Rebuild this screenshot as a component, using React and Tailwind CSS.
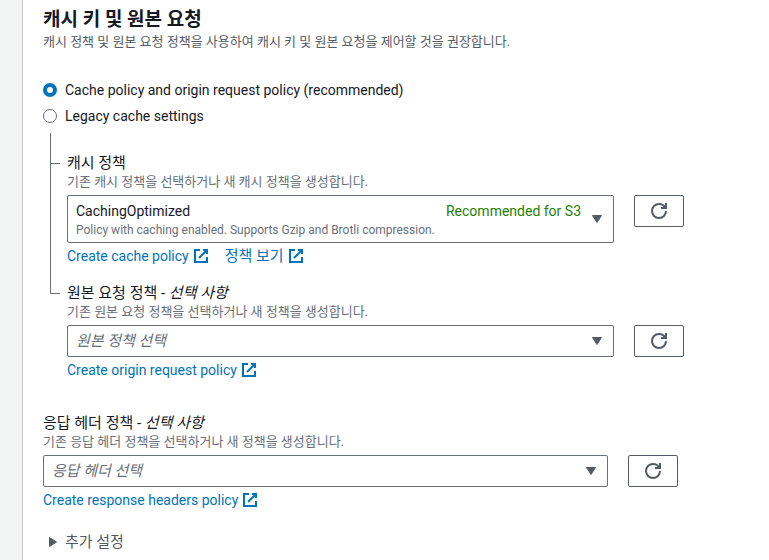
import clsx from "clsx";

const ExternalIcon = () => (
  <svg
    viewBox="0 0 16 16"
    className="w-4 h-4 shrink-0"
    fill="none"
    stroke="currentColor"
    strokeWidth="2"
    aria-hidden="true"
  >
    <path d="M14 9v5H2V2h5" />
    <path d="M6 10l8-8" />
    <path d="M10 2h4v4" />
  </svg>
);

const RefreshIcon = () => (
  <svg
    viewBox="0 0 16 16"
    className="w-4 h-4"
    fill="none"
    stroke="currentColor"
    strokeWidth="2"
    aria-hidden="true"
  >
    <path d="M15 8a7 7 0 1 1-7-7 6.9 6.9 0 0 1 6.3 4" />
    <path d="M10 5h5V0" />
  </svg>
);

const ExternalLink = ({ children, className }) => (
  <a
    href="#"
    className={clsx(
      "inline-flex items-center gap-1 text-[#0073bb] hover:underline",
      className
    )}
  >
    {children}
    <ExternalIcon />
  </a>
);

const Radio = ({ id, label, defaultChecked }) => (
  <div className="flex items-center gap-2">
    <input
      type="radio"
      name="cache-mode"
      id={id}
      defaultChecked={defaultChecked}
      className="appearance-none w-3.5 h-3.5 rounded-full border border-[#687078] bg-white checked:border-4 checked:border-[#0073bb]"
    />
    <label htmlFor={id}>{label}</label>
  </div>
);

const PolicyField = ({
  id,
  label,
  optional,
  description,
  value,
  detail,
  badge,
  links,
}) => {
  return (
    <div>
      <label htmlFor={id} className="block text-[15px]">
        {label}
        {optional && (
          <>
            {" - "}
            <i>선택 사항</i>
          </>
        )}
      </label>
      <p className="text-[13px] leading-4 text-[#687078]">{description}</p>
      <div className="flex items-start gap-5 mt-[5px]">
        <div className="relative flex-1">
          <select
            id={id}
            className={clsx(
              "block w-full appearance-none rounded-xs border border-[#687078] bg-white px-2",
              detail ? "h-12 pb-4" : "h-8 text-[15px] italic text-[#687078]"
            )}
          >
            <option>{value}</option>
          </select>
          {detail && (
            <div className="absolute inset-x-[9px] inset-y-[5px] pointer-events-none">
              <div className="text-right pr-6 text-[#1d8102]">{badge}</div>
              <div className="text-xs leading-4 text-[#687078]">{detail}</div>
            </div>
          )}
          <svg
            viewBox="0 0 10 8"
            className="absolute right-3 inset-y-0 my-auto w-2.5 h-2 pointer-events-none"
            fill="#545b64"
            stroke="#545b64"
            strokeLinejoin="round"
            aria-hidden="true"
          >
            <path d="M0.5 0.5h9L5 7.5z" />
          </svg>
        </div>
        <button
          type="button"
          aria-label="새로 고침"
          className="flex items-center justify-center w-[50px] h-8 rounded-xs border border-[#545b64] bg-white text-[#545b64]"
        >
          <RefreshIcon />
        </button>
      </div>
      <div className="flex gap-4 mt-0.5">
        {links.map((link) => (
          <ExternalLink key={link.text} className={link.className}>
            {link.text}
          </ExternalLink>
        ))}
      </div>
    </div>
  );
};

export default function App() {
  return (
    <div className="flex min-h-screen bg-[#f2f3f3] text-sm leading-[22px] text-[#16191f] font-['Roboto','Noto_Sans_CJK_KR',sans-serif]">
      <main className="flex-1 ml-[22px] border-l border-[#c6cccc] bg-white pl-5 pt-2">
        <h2 className="text-[19px] leading-6 font-bold">
          캐시 키 및 원본 요청
        </h2>
        <p className="mt-0.5 text-[13px] leading-4 text-[#545b64]">
          캐시 정책 및 원본 요청 정책을 사용하여 캐시 키 및 원본 요청을 제어할
          것을 권장합니다.
        </p>

        <div className="mt-[29px] flex flex-col gap-1">
          <Radio
            id="policy"
            label="Cache policy and origin request policy (recommended)"
            defaultChecked
          />
          <Radio id="legacy" label="Legacy cache settings" />
        </div>

        <div className="flex pl-[7px] pr-[85px] mt-1.5">
          <div className="w-2.5 mr-[7px]">
            <div className="h-[31px] border-l border-b border-[#687078]" />
            <div className="h-[130px] border-l border-b border-[#687078]" />
          </div>
          <div className="flex-1 flex flex-col gap-[15px] pt-[19px]">
            <PolicyField
              id="cache-policy"
              label="캐시 정책"
              description="기존 캐시 정책을 선택하거나 새 캐시 정책을 생성합니다."
              value="CachingOptimized"
              detail="Policy with caching enabled. Supports Gzip and Brotli compression."
              badge="Recommended for S3"
              links={[
                { text: "Create cache policy" },
                { text: "정책 보기", className: "text-[15px]" },
              ]}
            />
            <PolicyField
              id="origin-policy"
              label="원본 요청 정책"
              optional
              description="기존 원본 요청 정책을 선택하거나 새 정책을 생성합니다."
              value="원본 정책 선택"
              links={[{ text: "Create origin request policy" }]}
            />
          </div>
        </div>

        <div className="pr-[91px] mt-[31px]">
          <PolicyField
            id="headers-policy"
            label="응답 헤더 정책"
            optional
            description="기존 응답 헤더 정책을 선택하거나 새 정책을 생성합니다."
            value="응답 헤더 선택"
            links={[{ text: "Create response headers policy" }]}
          />
        </div>

        <button
          type="button"
          aria-expanded="false"
          className="flex items-center gap-2 mt-5 pl-1.5 text-[15px] text-[#545b64]"
        >
          <svg
            viewBox="0 0 8 10"
            className="w-2 h-2.5"
            fill="currentColor"
            stroke="currentColor"
            strokeLinejoin="round"
            aria-hidden="true"
          >
            <path d="M0.5 0.5v9L7.5 5z" />
          </svg>
          추가 설정
        </button>
      </main>
    </div>
  );
}
